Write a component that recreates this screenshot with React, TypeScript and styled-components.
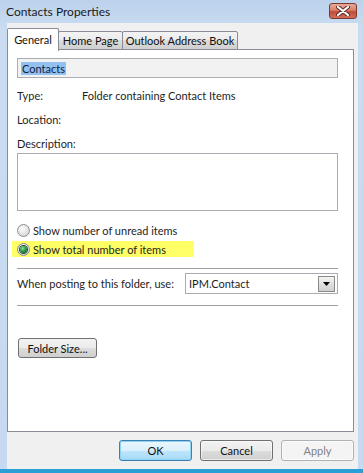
import React from "react";
import styled, { createGlobalStyle } from "styled-components";

const GlobalStyle = createGlobalStyle`
    html, body {
        margin: 0;
        padding: 0;
        background: #c4d7ee;
    }
    body {
        font-family: Lato, "Open Sans", sans-serif;
        font-size: 11px;
        color: #1e1e1e;
    }
`;

const App = () => {
    return (
        <>
            <GlobalStyle />
            <Window>
                <TitleBar>
                    <Title>Contacts Properties</Title>
                    <CloseButton>
                        <svg width="14" height="10" viewBox="0 0 14 10">
                            <path d="M2 1 L12 9 M12 1 L2 9" stroke="#5a2a22" strokeWidth="4" strokeLinecap="round" />
                            <path d="M2 1 L12 9 M12 1 L2 9" stroke="#ffffff" strokeWidth="2.2" strokeLinecap="round" />
                        </svg>
                    </CloseButton>
                </TitleBar>
                <Frame>
                    <Client>
                        <TabStrip>
                            <Tab $selected $width={52}>General</Tab>
                            <Tab $width={65}>Home Page</Tab>
                            <Tab $width={116}>Outlook Address Book</Tab>
                        </TabStrip>
                        <Panel>
                            <NameBox>
                                <Selected>Contacts</Selected>
                            </NameBox>
                            <InfoRow $top={10}>
                                <span>Type:</span>
                                <span>Folder containing Contact Items</span>
                            </InfoRow>
                            <InfoRow $top={8}>
                                <span>Location:</span>
                                <span />
                            </InfoRow>
                            <InfoRow $top={8}>
                                <span>Description:</span>
                                <span />
                            </InfoRow>
                            <DescriptionBox />
                            <RadioRow $top={11}>
                                <Radio />
                                Show number of unread items
                            </RadioRow>
                            <RadioRow $top={3} $highlight>
                                <Radio $checked />
                                Show total number of items
                            </RadioRow>
                            <Separator $top={11} />
                            <PostingRow>
                                <span>When posting to this folder, use:</span>
                                <Combo>
                                    <span>IPM.Contact</span>
                                    <ComboArrow>
                                        <svg width="7" height="4" viewBox="0 0 7 4">
                                            <path d="M0 0 H7 L3.5 4 Z" fill="#000" />
                                        </svg>
                                    </ComboArrow>
                                </Combo>
                            </PostingRow>
                            <Separator $top={11} />
                            <FolderSizeButton>Folder Size...</FolderSizeButton>
                        </Panel>
                        <ButtonRow>
                            <DialogButton $variant="default">OK</DialogButton>
                            <DialogButton>Cancel</DialogButton>
                            <DialogButton $variant="disabled">Apply</DialogButton>
                        </ButtonRow>
                    </Client>
                </Frame>
            </Window>
        </>
    );
};

export default App;

const Window = styled.div`
    width: 363px;
    height: 473px;
    display: flex;
    flex-direction: column;
    box-sizing: border-box;
    background: linear-gradient(#bcd2ec, #c9dcf1 30px, #c6d9f0);
    border-bottom: 4px solid #2b9fd4;
    overflow: hidden;
`;

const TitleBar = styled.div`
    height: 23px;
    display: flex;
    align-items: center;
    justify-content: space-between;
    padding: 0 6px 0 6px;
    flex-shrink: 0;
`;

const Title = styled.span`
    font-size: 12px;
    color: #1a1a1a;
`;

const CloseButton = styled.div`
    width: 28px;
    height: 16px;
    margin-top: -2px;
    box-sizing: border-box;
    border: 1px solid #7a3a30;
    border-radius: 3px;
    background: linear-gradient(#e8a898, #d8806c 45%, #c24a36 55%, #d0705c);
    display: flex;
    align-items: center;
    justify-content: center;
`;

const Frame = styled.div`
    flex: 1;
    display: flex;
    padding: 0 5px 0 7px;
    min-height: 0;
`;

const Client = styled.div`
    flex: 1;
    display: flex;
    flex-direction: column;
    background: #f0f0f0;
    padding: 5px 4px 0 0;
`;

const TabStrip = styled.div`
    display: flex;
    align-items: flex-end;
    height: 22px;
    margin-bottom: -1px;
    position: relative;
    z-index: 1;
`;

const Tab = styled.div<{ $selected?: boolean; $width: number }>`
    width: ${(p) => p.$width}px;
    height: ${(p) => (p.$selected ? 23 : 19)}px;
    box-sizing: border-box;
    border: 1px solid #898c95;
    border-bottom: ${(p) => (p.$selected ? "none" : "1px solid #898c95")};
    margin-left: ${(p) => (p.$selected ? 0 : -1)}px;
    margin-bottom: ${(p) => (p.$selected ? -1 : 0)}px;
    border-radius: 2px 2px 0 0;
    background: ${(p) => (p.$selected ? "#ffffff" : "linear-gradient(#f3f3f3, #ebebeb 50%, #dddddd 50%, #cfcfcf)")};
    display: flex;
    align-items: center;
    justify-content: center;
    padding-bottom: ${(p) => (p.$selected ? 2 : 0)}px;
    white-space: nowrap;
    color: #111;
    &:first-child {
        margin-left: 0;
    }
`;

const Panel = styled.div`
    height: 383px;
    box-sizing: border-box;
    border: 1px solid #898c95;
    background: #ffffff;
    padding: 8px 15px 0 9px;
    display: flex;
    flex-direction: column;
`;

const NameBox = styled.div`
    height: 20px;
    box-sizing: border-box;
    border: 1px solid #abadb3;
    background: #f2f2f2;
    display: flex;
    align-items: center;
    padding-left: 3px;
`;

const Selected = styled.span`
    background: #93c0ee;
    color: #0e1c44;
    line-height: 13px;
    padding: 0 1px;
`;

const InfoRow = styled.div<{ $top: number }>`
    display: grid;
    grid-template-columns: 65px 1fr;
    height: 16px;
    line-height: 16px;
    margin-top: ${(p) => p.$top}px;
`;

const DescriptionBox = styled.div`
    height: 58px;
    margin-top: 1px;
    box-sizing: border-box;
    border: 1px solid #a9abb2;
    background: #ffffff;
`;

const RadioRow = styled.div<{ $top: number; $highlight?: boolean }>`
    display: flex;
    align-items: center;
    gap: 3px;
    height: 16px;
    margin-top: ${(p) => p.$top}px;
    margin-left: ${(p) => (p.$highlight ? -5 : 0)}px;
    padding: ${(p) => (p.$highlight ? "0 28px 0 5px" : "0")};
    width: fit-content;
    background: ${(p) => (p.$highlight ? "#ffff66" : "transparent")};
`;

const Radio = styled.span<{ $checked?: boolean }>`
    width: 13px;
    height: 13px;
    box-sizing: border-box;
    border-radius: 50%;
    border: 1px solid #8c8e91;
    background: radial-gradient(circle at 40% 35%, #ffffff, #d4d4d4 80%);
    display: flex;
    align-items: center;
    justify-content: center;
    flex-shrink: 0;
    &::after {
        content: "";
        display: ${(p) => (p.$checked ? "block" : "none")};
        width: 7px;
        height: 7px;
        border-radius: 50%;
        background: radial-gradient(circle at 40% 35%, #8ee08e, #1f8a3a 55%, #0d4a1c);
        box-shadow: 0 0 0 1px #21532b;
    }
`;

const Separator = styled.div<{ $top: number }>`
    height: 1px;
    background: #a0a0a0;
    margin-top: ${(p) => p.$top}px;
    flex-shrink: 0;
`;

const PostingRow = styled.div`
    display: flex;
    align-items: center;
    justify-content: space-between;
    height: 21px;
    margin-top: 4px;
`;

const Combo = styled.div`
    width: 153px;
    height: 21px;
    box-sizing: border-box;
    border: 1px solid #a9abb2;
    display: flex;
    align-items: center;
    justify-content: space-between;
    padding: 0 2px 0 3px;
`;

const ComboArrow = styled.span`
    width: 17px;
    height: 16px;
    box-sizing: border-box;
    border: 1px solid #8a8a8a;
    background: linear-gradient(#f4f4f4, #e0e0e0 50%, #cfcfcf);
    display: flex;
    align-items: center;
    justify-content: center;
`;

const FolderSizeButton = styled.button`
    align-self: flex-start;
    width: 79px;
    height: 20px;
    margin: 32px 0 0 1px;
    box-sizing: border-box;
    border: 1px solid #707070;
    border-radius: 3px;
    background: linear-gradient(#f2f2f2, #ebebeb 50%, #dddddd 50%, #cfcfcf);
    font-family: inherit;
    font-size: 11px;
    color: #111;
    padding: 0;
`;

const ButtonRow = styled.div`
    display: flex;
    justify-content: flex-end;
    gap: 8px;
    padding-top: 8px;
`;

const DialogButton = styled.button<{ $variant?: "default" | "disabled" }>`
    width: 73px;
    height: 21px;
    box-sizing: border-box;
    border-radius: 3px;
    padding: 0;
    font-family: inherit;
    font-size: 11px;
    border: 1px solid ${(p) => (p.$variant === "default" ? "#3c7fb1" : p.$variant === "disabled" ? "#adb2b5" : "#707070")};
    color: ${(p) => (p.$variant === "disabled" ? "#838383" : "#111")};
    background: ${(p) =>
        p.$variant === "default"
            ? "linear-gradient(#eaf6fd, #d9f0fc 50%, #bee6fd 50%, #a7d9f5)"
            : p.$variant === "disabled"
            ? "#f4f4f4"
            : "linear-gradient(#f2f2f2, #ebebeb 50%, #dddddd 50%, #cfcfcf)"};
    box-shadow: ${(p) => (p.$variant === "default" ? "inset 0 0 0 1px #8fd2f5" : "inset 0 0 0 1px rgba(255,255,255,0.6)")};
`;
